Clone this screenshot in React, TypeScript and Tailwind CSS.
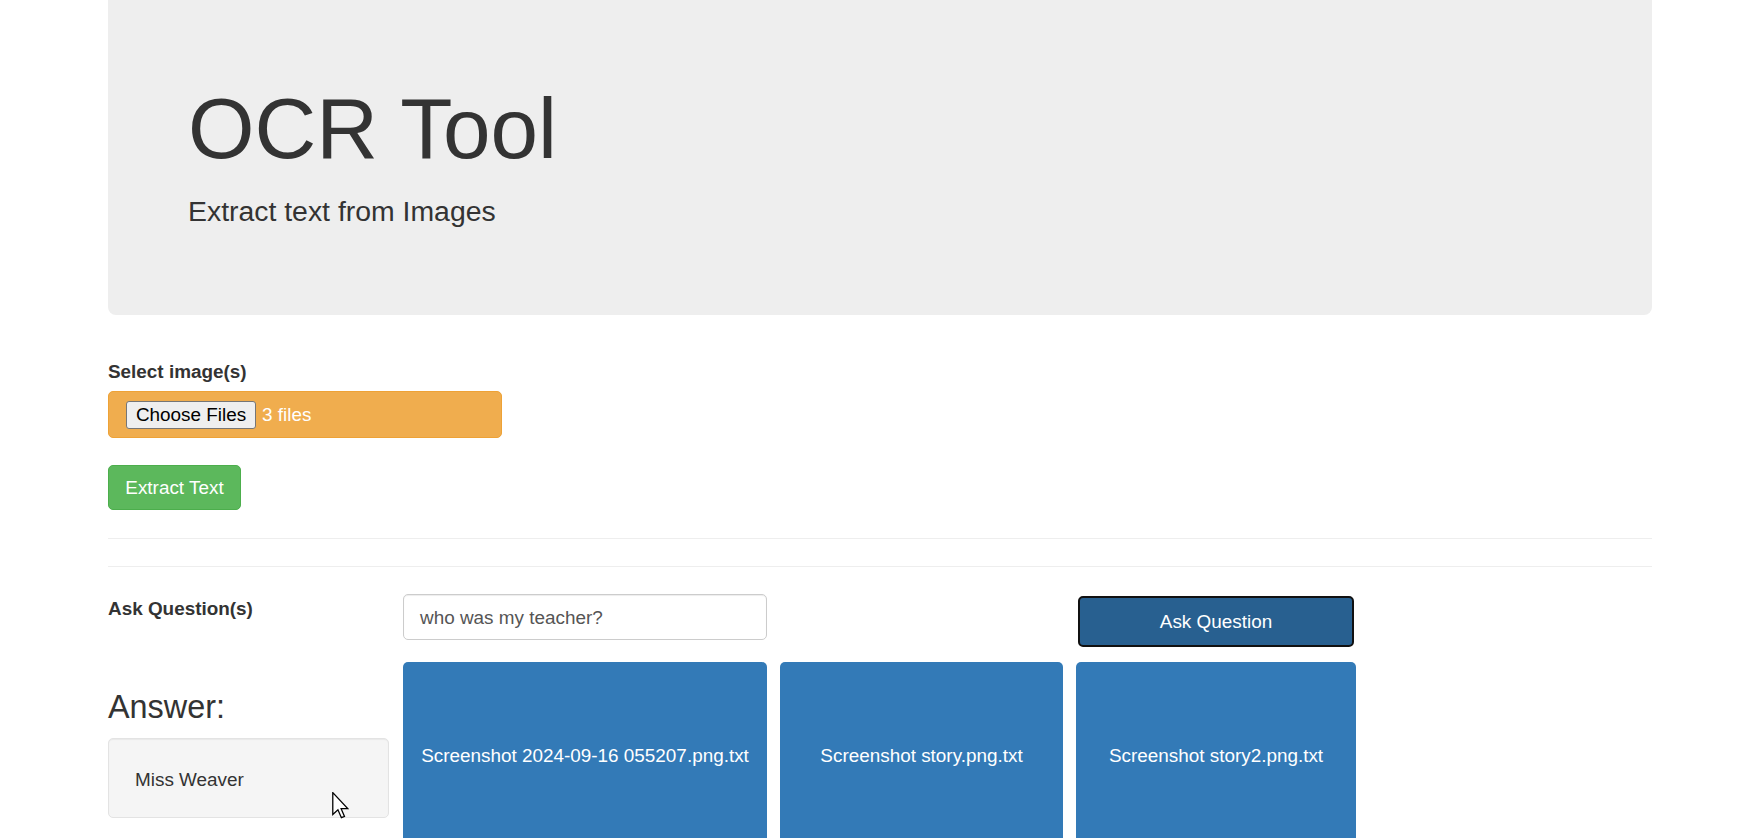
export default function App() {
  const files = [
    { name: 'Screenshot 2024-09-16 055207.png.txt' },
    { name: 'Screenshot story.png.txt' },
    { name: 'Screenshot story2.png.txt' },
  ];

  return (
    <div className="min-h-screen w-full bg-white font-['Liberation_Sans',Arial,sans-serif] text-[18.9px] leading-[27px] text-[#333]">
      <div className="ml-[108px] w-[1544px]">
        {/* Jumbotron */}
        <div className="h-[315px] rounded-b-[8px] bg-[#eee] pl-[80px] pt-[82px]">
          <h1 className="text-[85.5px] font-normal leading-[94px] text-[#333]">OCR Tool</h1>
          <p className="mt-[15px] text-[28.4px] leading-[40px] text-[#333]">Extract text from Images</p>
        </div>

        {/* Upload form */}
        <div className="mt-[43px]">
          <label className="block font-bold">Select image(s)</label>
          <div className="mt-[6px] flex h-[47px] w-[394px] items-center rounded-[5px] border border-[#eea236] bg-[#f0ad4e] pl-[17px]">
            <span className="flex h-[28px] w-[130px] items-center justify-center rounded-[3px] border border-[#767676] bg-[#efefef] text-black">
              Choose Files
            </span>
            <span className="ml-[6px] text-white">3 files</span>
          </div>
          <button className="mt-[27px] flex h-[45px] w-[133px] items-center justify-center rounded-[5px] border border-[#4cae4c] bg-[#5cb85c] text-white">
            Extract Text
          </button>
        </div>

        <hr className="mt-[28px] border-t border-[#eee]" />
        <hr className="mt-[27px] border-t border-[#eee]" />

        {/* Question section */}
        <div className="mt-[26px] flex">
          <div className="w-[281px]">
            <label className="mt-[2px] block font-bold">Ask Question(s)</label>
            <h3 className="mt-[67px] text-[32.4px] font-normal leading-[36px]">Answer:</h3>
            <div className="relative mt-[13px] h-[80px] rounded-[5px] border border-[#e3e3e3] bg-[#f5f5f5] pl-[26px] pt-[27px] shadow-[inset_0_1px_1px_rgba(0,0,0,0.05)]">
              Miss Weaver
              <svg
                className="absolute left-[223px] top-[53px]"
                width="17"
                height="27"
                viewBox="0 0 13 21"
              >
                <path
                  d="M0.5 0.5 L0.5 17.5 L4.5 13.8 L7.2 20 L9.6 19 L7 13 L12.3 13 Z"
                  fill="#fff"
                  stroke="#000"
                  strokeWidth="1"
                  strokeLinejoin="miter"
                />
              </svg>
            </div>
          </div>

          <div className="ml-[14px] grid grid-cols-[364px_283px_280px] items-start gap-x-[13px] gap-y-[15px]">
            <div className="mt-[1px] flex h-[46px] items-center rounded-[5px] border border-[#ccc] bg-white pl-[16px] text-[#555] shadow-[inset_0_1px_1px_rgba(0,0,0,0.075)]">
              who was my teacher?
            </div>
            <div />
            <button className="mx-[2px] mt-[3px] flex h-[51px] items-center justify-center rounded-[5px] border-2 border-[#111] bg-[#286090] text-white">
              Ask Question
            </button>

            {files.map((f) => (
              <div
                key={f.name}
                className="flex h-[186px] items-center justify-center rounded-[5px] bg-[#337ab7] px-[10px] text-center text-white"
              >
                {f.name}
              </div>
            ))}
          </div>
        </div>
      </div>
    </div>
  );
}
